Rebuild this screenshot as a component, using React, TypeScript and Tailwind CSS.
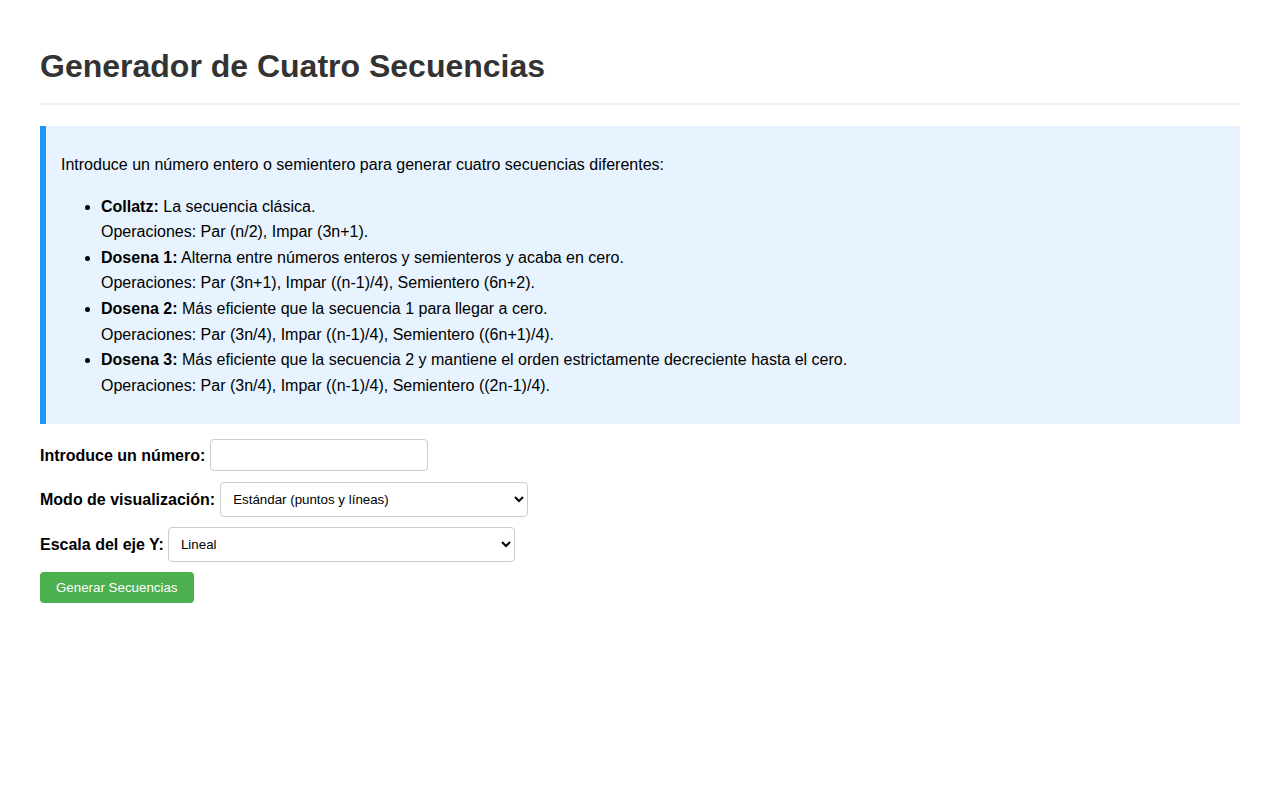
import React from "react";

export default function App() {
  const items = [
    { t: "Collatz:", d: "La secuencia clásica.", o: "Operaciones: Par (n/2), Impar (3n+1)." },
    { t: "Dosena 1:", d: "Alterna entre números enteros y semienteros y acaba en cero.", o: "Operaciones: Par (3n+1), Impar ((n-1)/4), Semientero (6n+2)." },
    { t: "Dosena 2:", d: "Más eficiente que la secuencia 1 para llegar a cero.", o: "Operaciones: Par (3n/4), Impar ((n-1)/4), Semientero ((6n+1)/4)." },
    { t: "Dosena 3:", d: "Más eficiente que la secuencia 2 y mantiene el orden estrictamente decreciente hasta el cero.", o: "Operaciones: Par (3n/4), Impar ((n-1)/4), Semientero ((2n-1)/4)." },
  ];
  return (
    <div className="min-h-[800px] bg-white px-[40px] pt-[20px] text-black text-[16px] leading-[1.6]" style={{ fontFamily: '"Liberation Sans", Arial, sans-serif' }}>
      <h1 className="my-[21.44px] pb-[10px] border-b-2 border-[#eeeeee] text-[32px] font-bold text-[#333333] leading-[1.6]">
        Generador de Cuatro Secuencias
      </h1>
      <div className="bg-[#e7f3fe] border-l-[6px] border-[#2196F3] px-[15px] py-[10px] mb-[15px]">
        <p className="my-[16px]">Introduce un número entero o semientero para generar cuatro secuencias diferentes:</p>
        <ul className="my-[16px] pl-[40px] list-disc">
          {items.map((it) => (
            <li key={it.t}>
              <strong className="font-bold">{it.t}</strong> {it.d}
              <br />
              {it.o}
            </li>
          ))}
        </ul>
      </div>
      <div className="flex items-center gap-[5px] mb-[11px]">
        <label className="font-bold">Introduce un número:</label>
        <input type="text" className="w-[218px] h-[32px] px-[8px] border border-[#cccccc] rounded-[4px] text-[13.33px] bg-white" />
      </div>
      <div className="flex items-center gap-[5px] mb-[10px]">
        <label className="font-bold">Modo de visualización:</label>
        <select className="w-[308px] h-[35px] px-[8px] border border-[#cccccc] rounded-[4px] text-[13.33px] bg-white text-black">
          <option>Estándar (puntos y líneas)</option>
        </select>
      </div>
      <div className="flex items-center gap-[4px] mb-[10px]">
        <label className="font-bold">Escala del eje Y:</label>
        <select className="w-[347px] h-[35px] px-[8px] border border-[#cccccc] rounded-[4px] text-[13.33px] bg-white text-black">
          <option>Lineal</option>
        </select>
      </div>
      <button className="h-[31px] px-[16px] bg-[#4CAF50] text-white text-[13.33px] rounded-[4px] leading-normal">
        Generar Secuencias
      </button>
    </div>
  );
}
